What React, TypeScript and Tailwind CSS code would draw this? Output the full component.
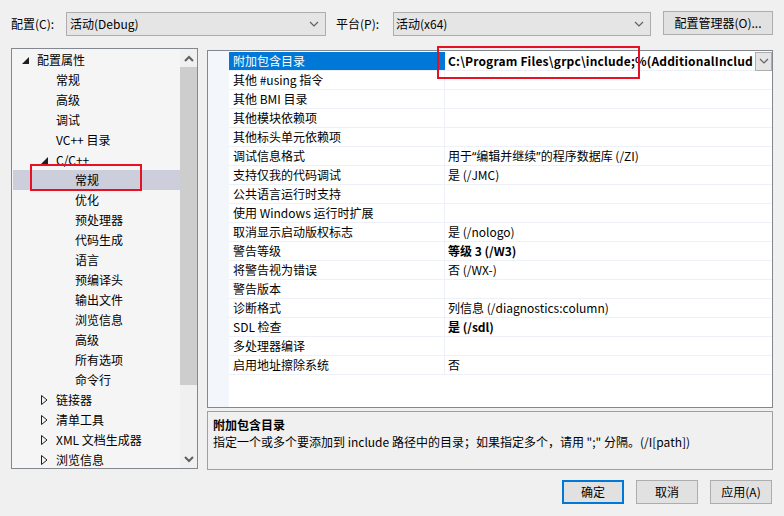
import React from "react";

const font = { fontFamily: '"Noto Sans CJK SC", "Noto Sans", sans-serif' };
const latin = { fontFamily: '"Noto Sans", sans-serif' };

function Chevron() {
  return (
    <svg width="10" height="6" viewBox="0 0 10 6">
      <path d="M1 1 L5 5 L9 1" fill="none" stroke="#606060" strokeWidth="1.2" />
    </svg>
  );
}

function ScrollArrow({ up = false }: { up?: boolean }) {
  return (
    <svg width="10" height="7" viewBox="0 0 10 7">
      {up ? (
        <path d="M1 6 L5 2 L9 6" fill="none" stroke="#606060" strokeWidth="2" />
      ) : (
        <path d="M1 1 L5 5 L9 1" fill="none" stroke="#606060" strokeWidth="2" />
      )}
    </svg>
  );
}

function Expanded() {
  return (
    <svg width="7" height="7" viewBox="0 0 7 7">
      <path d="M7 0 L7 7 L0 7 Z" fill="#1e1e1e" />
    </svg>
  );
}

function Collapsed() {
  return (
    <svg width="7" height="10" viewBox="0 0 7 10">
      <path d="M0.5 0.5 L6 5 L0.5 9.5 Z" fill="none" stroke="#1e1e1e" strokeWidth="1" />
    </svg>
  );
}

type TreeItem = { label: string; level: number; tri?: "open" | "closed"; selected?: boolean };

const tree: TreeItem[] = [
  { label: "配置属性", level: 1, tri: "open" },
  { label: "常规", level: 2 },
  { label: "高级", level: 2 },
  { label: "调试", level: 2 },
  { label: "VC++ 目录", level: 2 },
  { label: "C/C++", level: 2, tri: "open" },
  { label: "常规", level: 3, selected: true },
  { label: "优化", level: 3 },
  { label: "预处理器", level: 3 },
  { label: "代码生成", level: 3 },
  { label: "语言", level: 3 },
  { label: "预编译头", level: 3 },
  { label: "输出文件", level: 3 },
  { label: "浏览信息", level: 3 },
  { label: "高级", level: 3 },
  { label: "所有选项", level: 3 },
  { label: "命令行", level: 3 },
  { label: "链接器", level: 2, tri: "closed" },
  { label: "清单工具", level: 2, tri: "closed" },
  { label: "XML 文档生成器", level: 2, tri: "closed" },
  { label: "浏览信息", level: 2, tri: "closed" },
];

const indents: Record<number, string> = { 1: "pl-[25px]", 2: "pl-[44px]", 3: "pl-[63px]" };
const triPos: Record<number, string> = { 1: "left-[10px]", 2: "left-[29px]", 3: "left-[48px]" };

type Prop = { name: string; value?: React.ReactNode; bold?: boolean };
const props: Prop[] = [
  { name: "附加包含目录", value: "C:\\Program Files\\grpc\\include;%(AdditionalInclud", bold: true },
  { name: "其他 #using 指令" },
  { name: "其他 BMI 目录" },
  { name: "其他模块依赖项" },
  { name: "其他标头单元依赖项" },
  {
    name: "调试信息格式",
    value: (
      <>
        用于<span style={latin}>“</span>编辑并继续<span style={latin}>”</span>的程序数据库 (/ZI)
      </>
    ),
  },
  { name: "支持仅我的代码调试", value: "是 (/JMC)" },
  { name: "公共语言运行时支持" },
  { name: "使用 Windows 运行时扩展" },
  { name: "取消显示启动版权标志", value: "是 (/nologo)" },
  { name: "警告等级", value: "等级 3 (/W3)", bold: true },
  { name: "将警告视为错误", value: "否 (/WX-)" },
  { name: "警告版本" },
  { name: "诊断格式", value: "列信息 (/diagnostics:column)" },
  { name: "SDL 检查", value: "是 (/sdl)", bold: true },
  { name: "多处理器编译" },
  { name: "启用地址擦除系统", value: "否" },
];

export default function App() {
  return (
    <div
      style={font}
      className="relative w-[784px] h-[516px] bg-[#f0f0f0] text-[12px] text-[#000] overflow-hidden leading-none"
    >
      {/* Top bar */}
      <div className="flex items-center h-[24px] mt-[12px] pl-[11px]">
        <span className="w-[55px]">配置(C):</span>
        <div className="w-[260px] h-[24px] border border-[#adadad] bg-[#e5e5e5] flex items-center justify-between pl-[3px] pr-[6px]">
          <span>活动(Debug)</span>
          <Chevron />
        </div>
        <span className="ml-[10px] w-[57px]">平台(P):</span>
        <div className="w-[258px] h-[24px] border border-[#adadad] bg-[#e5e5e5] flex items-center justify-between pl-[2px] pr-[6px]">
          <span>活动(x64)</span>
          <Chevron />
        </div>
        <div className="ml-[12px] -mt-[2px] w-[110px] h-[24px] border border-[#adadad] bg-[#e1e1e1] flex items-center justify-center">
          配置管理器(O)...
        </div>
      </div>

      {/* Main */}
      <div className="flex mt-[12px] pl-[11px]">
        {/* Tree */}
        <div className="relative w-[187px] h-[421px] border border-[#828790] bg-[#f5f5f5] flex">
          <div className="flex-1 pt-[1px] overflow-hidden">
            {tree.map((t, i) => (
              <div
                key={i}
                className={`relative h-[20px] flex items-center ${indents[t.level]} ${t.selected ? "bg-[#cccedb] ml-[1px]" : ""}`}
              >
                {t.tri === "open" && (
                  <span className={`absolute ${triPos[t.level]} top-[7px] flex`}>
                    <Expanded />
                  </span>
                )}
                {t.tri === "closed" && (
                  <span className={`absolute ${triPos[t.level]} top-[5px] flex`}>
                    <Collapsed />
                  </span>
                )}
                <span className={t.selected ? "-ml-[1px]" : ""}>{t.label}</span>
              </div>
            ))}
          </div>
          <div className="w-[17px] bg-[#f0f0f0] flex flex-col items-center">
            <div className="h-[18px] flex items-center justify-center">
              <ScrollArrow up />
            </div>
            <div className="w-[17px] h-[318px] bg-[#cdcdcd]" />
            <div className="flex-1" />
            <div className="h-[18px] flex items-center justify-center">
              <ScrollArrow />
            </div>
          </div>
          <div className="absolute left-[18px] top-[115px] w-[112px] h-[27px] border-2 border-[#e81123]" />
        </div>

        {/* Right column */}
        <div className="ml-[9px] flex flex-col">
          <div className="relative mt-[2px] w-[566px] h-[358px] border border-[#828790] bg-white flex">
            <div className="w-[21px] bg-[#f3f6fb] h-full" />
            <div className="flex-1 pt-[1px]">
              {props.map((p, i) => (
                <div key={i} className="flex h-[19px] border-b border-[#edf1f7]">
                  <div
                    className={`w-[215px] flex items-center pl-[4px] ${i === 0 ? "bg-[#0078d7] text-white" : ""}`}
                  >
                    {p.name}
                  </div>
                  <div className={`flex-1 flex items-center pl-[3px] border-l ${i === 0 ? "border-[#0078d7]" : "border-[#edf1f7]"} whitespace-nowrap`}>
                    <span className={`${p.bold ? "font-bold" : ""} ${i === 0 ? "tracking-[0.18px]" : ""}`}>{p.value ?? ""}</span>
                    {i === 0 && (
                      <div className="ml-auto shrink-0 w-[17px] h-[19px] border border-[#adadad] bg-[#e5e5e5] flex items-center justify-center">
                        <Chevron />
                      </div>
                    )}
                  </div>
                </div>
              ))}
            </div>
            <div className="absolute left-[229px] -top-[5px] w-[203px] h-[33px] border-2 border-[#e81123]" />
          </div>

          <div className="mt-[3px] w-[566px] h-[59px] border border-[#a0a0a0] bg-[#f0f0f0] pl-[5px] pt-[5px]">
            <div className="font-bold h-[16px] flex items-center">附加包含目录</div>
            <div className="h-[18px] flex items-center">
              指定一个或多个要添加到 include 路径中的目录；如果指定多个，请用 ";" 分隔。(/I[path])
            </div>
          </div>
        </div>
      </div>

      {/* Buttons */}
      <div className="absolute left-[562px] top-[480px] flex gap-[12px]">
        <div className="w-[62px] h-[24px] border-2 border-[#0078d7] bg-[#e1e1e1] flex items-center justify-center">确定</div>
        <div className="w-[62px] h-[24px] border border-[#adadad] bg-[#e1e1e1] flex items-center justify-center">取消</div>
        <div className="w-[62px] h-[24px] border border-[#adadad] bg-[#e1e1e1] flex items-center justify-center">应用(A)</div>
      </div>
    </div>
  );
}
